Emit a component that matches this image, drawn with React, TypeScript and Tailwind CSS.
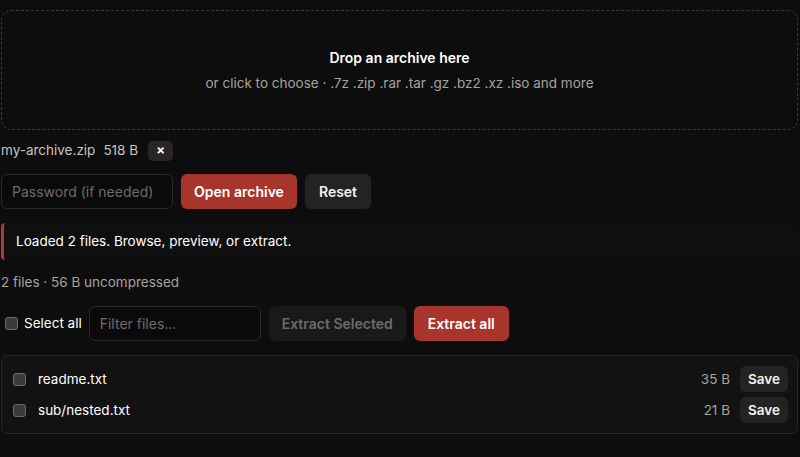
import { useState } from "react";

const FILES = [
  { name: "readme.txt", size: "35 B" },
  { name: "sub/nested.txt", size: "21 B" },
];

export default function App() {
  const [checked, setChecked] = useState<Record<string, boolean>>({});

  return (
    <div className="min-h-screen bg-[#0d0d0d] px-px pt-[10px] font-['Inter',sans-serif] text-[13.5px] text-[#e7e5e4]">
      {/* drop zone */}
      <div className="flex h-[120px] w-[797px] cursor-pointer flex-col items-center justify-center gap-[5px] rounded-[10px] border border-dashed border-[#3a3a3a] bg-[#0d0d0d]">
        <p className="text-[14px] font-semibold text-white">Drop an archive here</p>
        <p className="text-[13.5px] text-[#a8a29e]">
          or click to choose · .7z .zip .rar .tar .gz .bz2 .xz .iso and more
        </p>
      </div>

      {/* chosen file */}
      <div className="mt-[10px] flex h-[21px] items-center gap-[8px] text-[#c9c4bf]">
        <span>my-archive.zip</span>
        <span>518 B</span>
        <button className="ml-[2px] flex h-[20px] w-[25px] items-center justify-center rounded-[5px] bg-[#262626] text-[13px] font-bold text-white">
          ×
        </button>
      </div>

      {/* password row */}
      <div className="mt-[13px] flex items-center gap-[8px]">
        <input
          className="h-[35px] w-[172px] rounded-[6px] border border-[#2a2a2a] bg-[#0a0a0a] px-[10px] text-[14px] text-white placeholder-[#6f6b68] outline-none"
          placeholder="Password (if needed)"
          type="password"
        />
        <button className="h-[35px] w-[116px] rounded-[6px] bg-[#a8352b] text-[14px] font-semibold text-white">
          Open archive
        </button>
        <button className="h-[35px] w-[66px] rounded-[6px] bg-[#232323] text-[14px] font-semibold text-[#f2f2f2]">
          Reset
        </button>
      </div>

      {/* status */}
      <div className="mt-[14px] flex h-[37px] w-[797px] items-center rounded-[4px] border-l-[3px] border-[#b23a2e] bg-[#0f0f0f] pl-[12px] text-white">
        Loaded 2 files. Browse, preview, or extract.
      </div>

      <p className="mt-[12px] h-[20px] leading-[20px] text-[#a8a29e]">2 files · 56 B uncompressed</p>

      {/* toolbar */}
      <div className="mt-[14px] flex items-center gap-[8px]">
        <label className="flex items-center gap-[6px] pl-[4px] text-white">
          <span className="h-[13px] w-[13px] rounded-[3px] border border-[#6b6b6b] bg-[#3b3b3b]" />
          Select all
        </label>
        <input
          className="-ml-px h-[35px] w-[172px] rounded-[6px] border border-[#2a2a2a] bg-[#0a0a0a] px-[10px] text-[14px] text-white placeholder-[#6f6b68] outline-none"
          placeholder="Filter files..."
        />
        <button
          disabled
          className="h-[35px] w-[137px] rounded-[6px] bg-[#191919] text-[14px] font-semibold text-[#6b6b6b]"
        >
          Extract Selected
        </button>
        <button className="h-[35px] w-[95px] rounded-[6px] bg-[#a8352b] text-[14px] font-semibold text-white">
          Extract all
        </button>
      </div>

      {/* file list */}
      <div className="mt-[14px] flex w-[797px] flex-col gap-[5px] rounded-[6px] border border-[#262626] bg-[#121212] py-[10px] pl-[11px] pr-[9px]">
        {FILES.map((f) => (
          <div key={f.name} className="flex h-[26px] items-center">
            <span
              onClick={() => setChecked({ ...checked, [f.name]: !checked[f.name] })}
              className="h-[13px] w-[13px] rounded-[3px] border border-[#6b6b6b] bg-[#3b3b3b]"
            />
            <span className="ml-[12px] text-white">{f.name}</span>
            <span className="ml-auto text-[#a8a29e]">{f.size}</span>
            <button className="ml-[10px] h-[26px] w-[48px] rounded-[6px] bg-[#232323] text-[13.5px] font-semibold text-[#f2f2f2]">
              Save
            </button>
          </div>
        ))}
      </div>
    </div>
  );
}
